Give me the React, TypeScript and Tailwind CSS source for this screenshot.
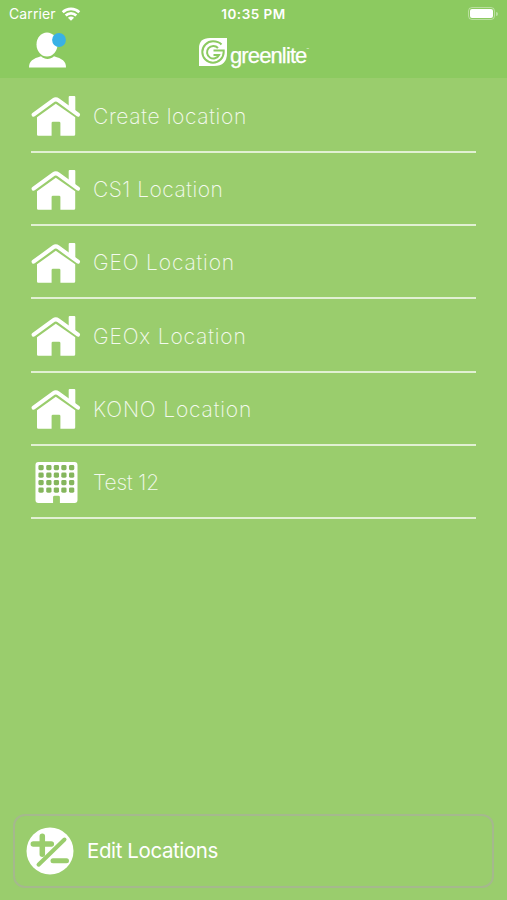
const HouseIcon = () => (
    <svg viewBox="0 0 50 42" className="w-[50px] h-[42px]" fill="white">
        <path d="M37.7 12V2q0-1 1-1h4.6q1 0 1 1v16z" />
        <path d="M2.6 19.7 22.5 5.2q2.3-1.6 4.6 0L47 19.7" fill="none" stroke="white" strokeWidth="4" strokeLinecap="round" />
        <path d="M24.8 8.8 44.2 22.3V39.5q0 1.3-1.3 1.3H29.4V28q0-1.3-1.3-1.3h-6.2q-1.3 0-1.3 1.3v12.8H7.3Q6 40.8 6 39.5V22.3z" />
    </svg>
)

const BuildingIcon = () => (
    <svg viewBox="0 0 50 44" className="w-[50px] h-[43px]">
        <path d="M7 1h37q3 0 3 3v36q0 3-3 3H29v-6q0-1.5-1.5-1.5h-4Q22 35.5 22 37v6H7q-3 0-3-3V4q0-3 3-3z" fill="white" />
        {[4, 11.8, 19.5, 27].map((y) =>
            [7, 15, 22.7, 30.4, 38.3].map((x) => (
                <rect key={`${x}-${y}`} x={x} y={y} width="5.4" height="5.4" rx="1.5" fill="#85b65d" />
            ))
        )}
    </svg>
)

const WifiIcon = () => (
    <svg viewBox="0 0 20 16" className="w-5 h-4" fill="none" stroke="white" strokeWidth="2.7">
        <path d="M1.7 6.2a12 12 0 0 1 16.6 0M4.7 9.5a7.6 7.6 0 0 1 10.6 0" />
        <path d="M10 14.8 6.9 11.7q3.1-2.5 6.2 0z" fill="white" stroke="none" />
    </svg>
)

const UserIcon = () => (
    <svg viewBox="0 0 40 38" className="w-10 h-[38px]">
        <path d="M1 36.500c0-6.500 4-8.800 12-11.200 4 3.700 9 3.700 13 0 8 2.400 12 4.700 12 11.200z" fill="white" />
        <ellipse cx="19" cy="13.500" rx="10.500" ry="12" fill="white" />
        <circle cx="31" cy="9" r="6.900" fill="#39b1e5" />
    </svg>
)

const Logo = () => (
    <div className="flex items-start text-white">
        <svg viewBox="0 0 30 30" className="w-[30px] h-[30px]">
            <path d="M1 29V11Q1 1 12 1h17v15q0 13-13 13z" fill="white" />
            <g fill="none" stroke="#8cca60" strokeWidth="2">
                <path d="M23.5 7.500Q20.500 4.300 15 4.300a10.700 10.700 0 1 0 10.700 10.700v-1.500H15.500" />
                <path d="M20 11a6.300 6.300 0 1 0 1 7H15.500" />
            </g>
        </svg>
        <span className="ml-[2px] mt-[6px] text-[22px] leading-[26px] tracking-[-0.88px] font-['Liberation_Sans',sans-serif] [-webkit-text-stroke:0.25px_white]">greenlite</span>
        <span className="mt-[11px] text-[4px] leading-none">™</span>
    </div>
)

const EditIcon = () => (
    <svg viewBox="0 0 48 48" className="w-12 h-12">
        <circle cx="24" cy="24" r="23.500" fill="white" />
        <g stroke="#9acd6d" strokeLinecap="round" fill="none">
            <path d="M16.300 9.300v18M7.300 17h18" strokeWidth="5.500" />
            <path d="M12.500 37.700 38.500 12.500" strokeWidth="4" />
            <path d="M27 33.800h13.500" strokeWidth="5" />
        </g>
    </svg>
)

const locations = [
    { name: "Create location", tracking: "tracking-[0.65px]" },
    { name: "CS1 Location", tracking: "tracking-[0.5px]" },
    { name: "GEO Location", tracking: "tracking-[0.85px]" },
    { name: "GEOx Location", tracking: "tracking-[0.85px]" },
    { name: "KONO Location", tracking: "tracking-[0.85px]" },
    { name: "Test 12", tracking: "tracking-[-0.1px]", building: true },
]

export default function App() {
    return (
        <div className="w-full h-[900px] bg-[#9acd6d] flex flex-col text-white font-['Inter',sans-serif] overflow-hidden">
            <header className="h-[78px] shrink-0 bg-[#8cca60]">
                <div className="h-7 px-[9px] grid grid-cols-3 items-center text-[14px]">
                    <div className="flex items-center gap-[5px] pb-px">
                        <span className="tracking-[0.1px]">Carrier</span>
                        <WifiIcon />
                    </div>
                    <span className="text-center font-semibold text-[13.5px] tracking-[0.5px]">10:35 PM</span>
                    <div className="flex items-center justify-end gap-px pb-px">
                        <div className="w-[27px] h-[13px] rounded-[4px] border border-white/40 p-px">
                            <div className="h-full rounded-[2px] bg-white" />
                        </div>
                        <div className="w-[2px] h-1 rounded-r bg-white/40" />
                    </div>
                </div>
                <div className="grid grid-cols-3 items-start">
                    <div className="pl-7 pt-[3px]"><UserIcon /></div>
                    <div className="pt-[9px] pl-[29px]"><Logo /></div>
                </div>
            </header>
            <main className="px-[31px] flex-1">
                {locations.map((item) => (
                    <div key={item.name} className="h-[73.3px] first:h-[74.8px] flex items-end border-b-2 border-white/70">
                        <div className="w-[62px] pb-[13.5px]">
                            {item.building ? <BuildingIcon /> : <HouseIcon />}
                        </div>
                        <span className={`pb-[20px] text-[21px] leading-[28px] font-extralight whitespace-nowrap text-white/90 ${item.tracking}`}>{item.name}</span>
                    </div>
                ))}
            </main>
            <footer className="px-[13px] pb-[12px]">
                <button className="w-full h-[74px] rounded-[12px] border-2 border-[#a5b88d] flex items-center px-[11px] gap-[13px]">
                    <EditIcon />
                    <span className="pt-px text-[20.5px] tracking-[-0.4px]">Edit Locations</span>
                </button>
            </footer>
        </div>
    )
}
